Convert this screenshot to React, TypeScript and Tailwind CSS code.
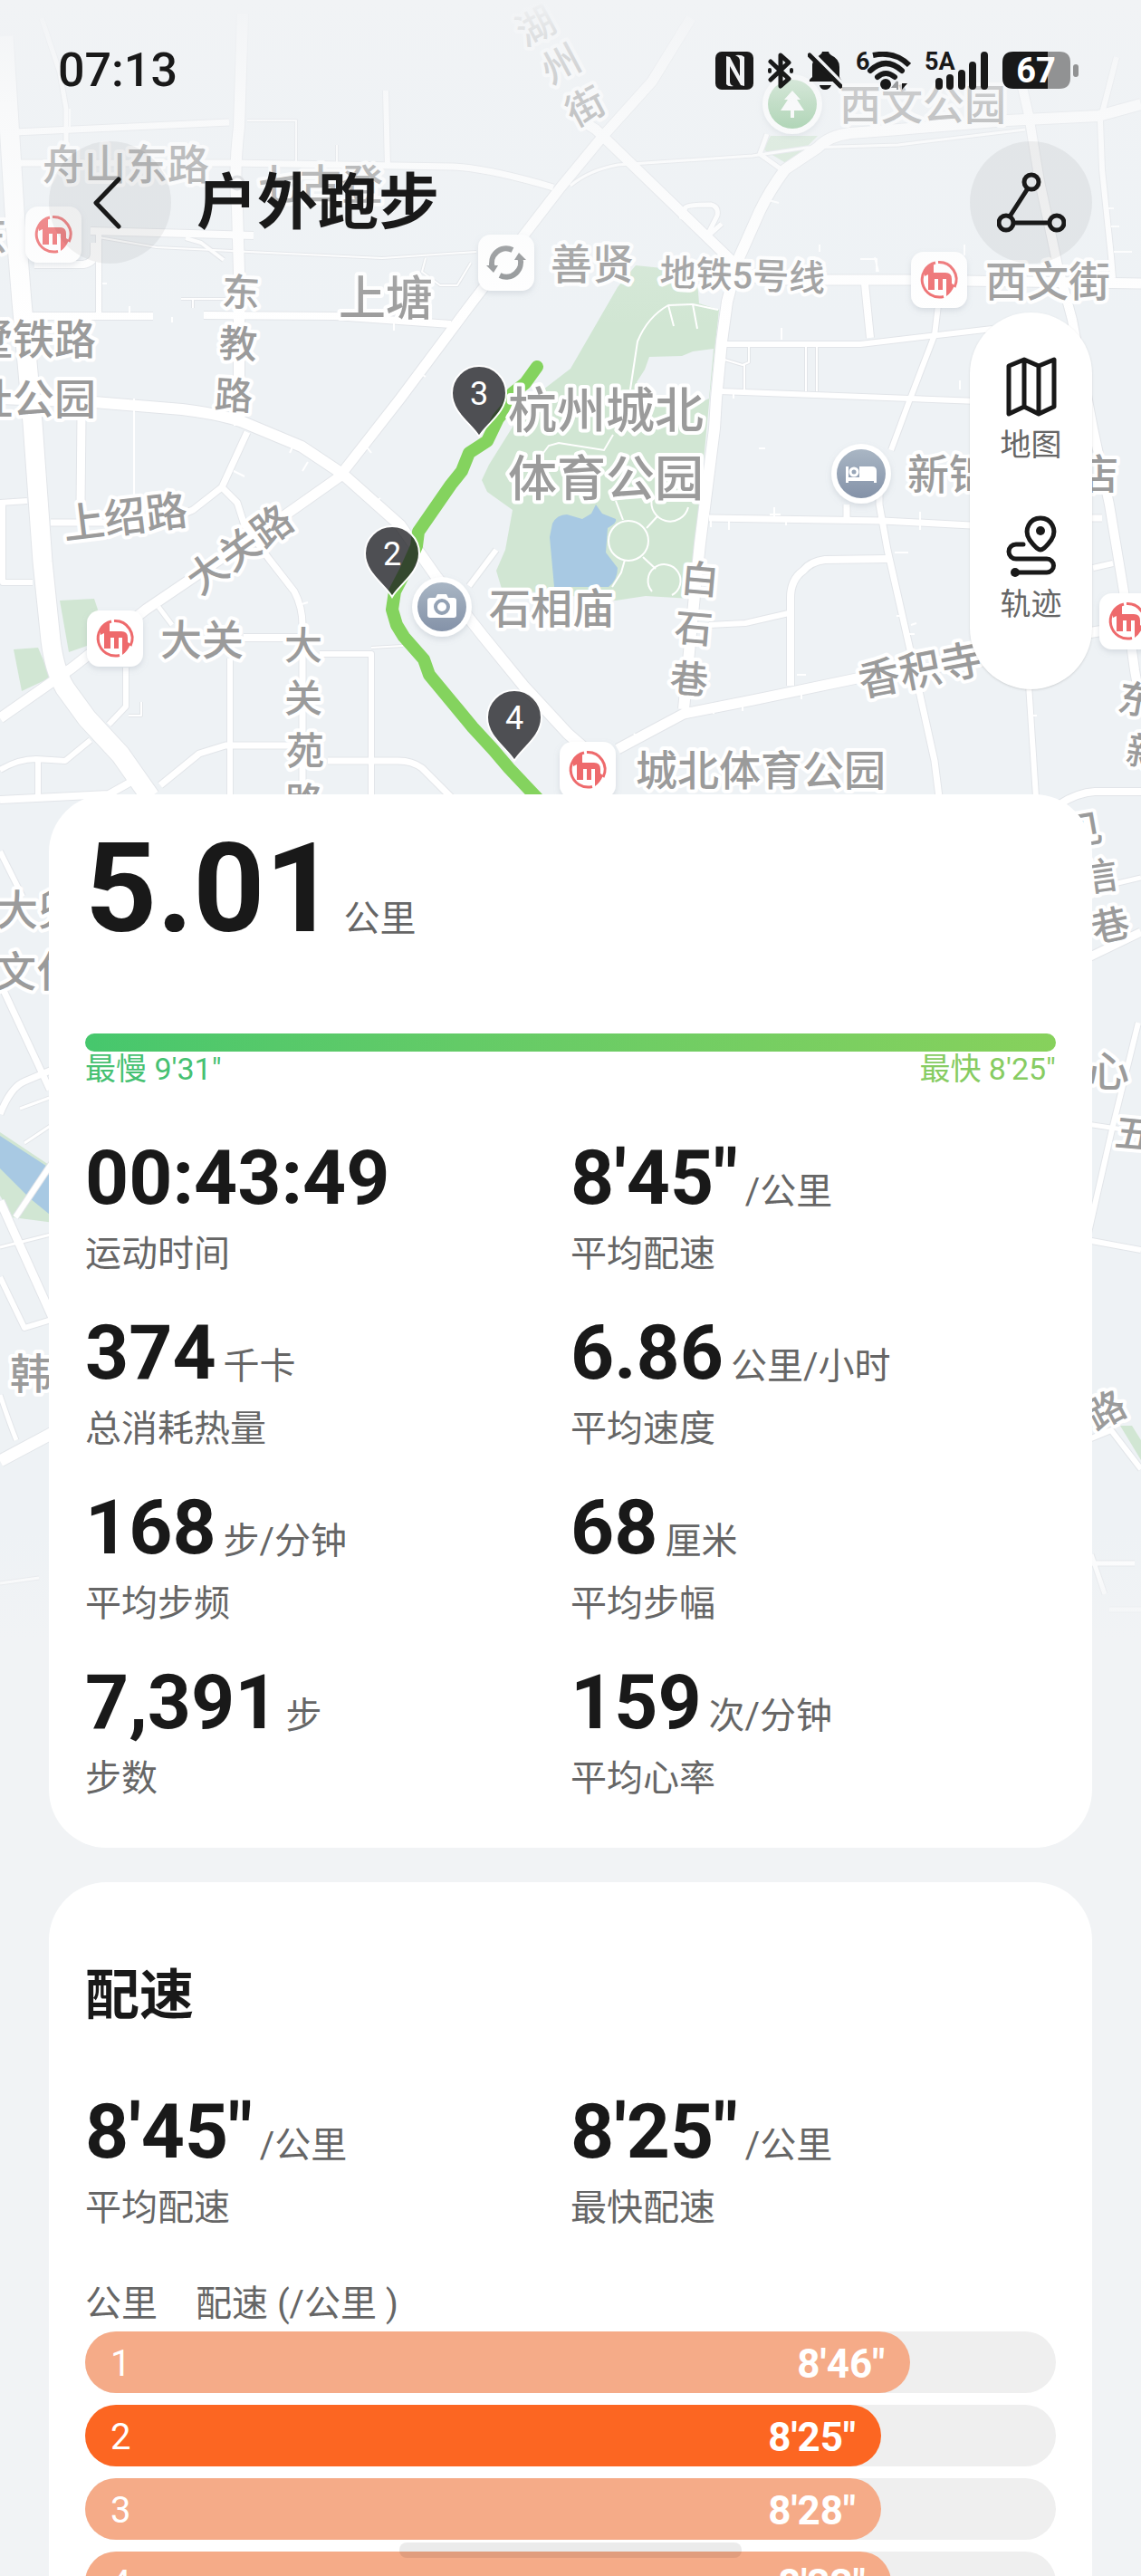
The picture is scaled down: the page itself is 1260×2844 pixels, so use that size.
import { ReactNode } from "react";

type Road = [d: string, width: number];

const roads: Road[] = [
  ["M4 40 16 233 24 333 36 467 47 620 56 707Q60 740 72 760L96 793 133 833 166 880", 21],
  ["M16 146 253 135", 7],
  ["M273 133H327V180", 2],
  ["M46 20 66 80 73 120V200", 5],
  ["M268 15 264 140Q258 190 262 230L264 300V470", 12],
  ["M16 180 250 180 500 184Q540 186 611 207", 7],
  ["M426 100 428 185", 6],
  ["M372 160V182", 2],
  ["M100 255 280 260", 8],
  ["M109 262 173 273 422 285 526 278", 2],
  ["M205 263 222 268 247 287", 4],
  ["M38 292H92Q104 290 104 280V268", 8],
  ["M109 258V347", 6],
  ["M32 349H169", 8],
  ["M200 330H250M213 330V340", 2],
  ["M225 348 370 349 498 358", 8],
  ["M470 285 466 300 486 315H505L520 290", 2],
  ["M763 20 720 90 666 150 619 207 522 333 442 440 374 527 313 570 161 673 80 737 0 793", 11],
  ["M0 440 104 444 201 452Q250 458 273 468L333 493 378 523 442 580 482 637 534 703 578 757 627 810 650 830", 12],
  ["M273 477 245 538 213 563 180 577H56", 7],
  ["M245 538 262 555 270 580 297 617 325 653Q334 670 334 690V880", 7],
  ["M90 460 89 557", 9],
  ["M0 555 30 553M3 555V643H36", 6],
  ["M269 704H334", 8],
  ["M353 722H410V880", 6],
  ["M410 715 445 713", 2],
  ["M254 727V880", 6],
  ["M177 867 220 832 249 823H321M362 840H440Q455 840 466 848L498 880", 7],
  ["M139 737V780L120 800M100 817 72 840 40 838Q20 838 0 850M42 840V880", 6],
  ["M0 883 120 877 145 863", 8],
  ["M142 790H156V775", 2],
  ["M518 647 548 607", 6],
  ["M175 670 190 690", 5],
  ["M642 133 658 143 807 287 823 300Q835 309 850 309H1003L1260 313", 11],
  ["M1260 115 1213 128 1112 133 992 143 939 147Q915 150 903 163L867 187Q850 210 839 233L815 287 803 333 797 377 791 440 789 473 773 600 767 657 755 783", 12],
  ["M630 205Q650 188 682 182L831 172 891 163 992 160 1132 143", 3],
  ["M847 148 839 170 867 190", 5],
  ["M752 242 757 229Q760 226 785 226 794 228 792 238L780 262M797 247 779 263", 5],
  ["M955 313 961 373", 8],
  ["M799 380H950L1096 363", 6],
  ["M1036 337 1032 370 1004 443 984 497", 6],
  ["M795 432 1080 443", 6],
  ["M890 383V432M902 383V432", 2],
  ["M800 397 820 403 827 400V383M822 403V430", 2],
  ["M1120 57 1136 127 1148 200 1168 293 1184 353 1207 473 1225 557 1241 653 1253 740 1260 780", 10],
  ["M1233 63 1215 133 1217 187 1227 283 1229 307", 6],
  ["M783 572 975 575 1072 580M1200 572H1217", 7],
  ["M971 540V557L980 607 1004 713 1032 840 1037 880M935 557V577", 7],
  ["M980 617 911 618Q895 620 887 630 873 640 873 660V757", 8],
  ["M783 690 823 688 871 677", 6],
  ["M682 827 755 788 831 773 951 748 1084 730 1207 698 1225 695", 11],
  ["M1136 755 1144 880", 6],
  ["M1207 627 1229 622", 6],
  ["M1170 888Q1190 875 1209 874H1260", 8],
  ["M0 940 25 990", 6],
  ["M0 1085 55 1203", 7],
  ["M0 1230Q12 1200 27 1194L60 1180", 7],
  ["M0 1410 27 1466 60 1456", 6],
  ["M0 1326 58 1455", 9],
  ["M17 1344 60 1280", 6],
  ["M0 1377 60 1362M27 1262 60 1240M22 1224 60 1210", 3],
  ["M0 1540Q10 1570 18 1590", 5],
  ["M0 1613 60 1581", 13],
  ["M0 1748 43 1742", 3],
  ["M1230 976 1260 969", 5],
  ["M1200 1058 1260 1029", 9],
  ["M1200 1241 1260 1250", 5],
  ["M1257 1129 1228 1247 1200 1370", 6],
  ["M1200 1369 1260 1380", 6],
  ["M1200 1590 1227 1579 1260 1622", 6],
  ["M1200 1726H1253M1205 1716 1220 1760M1225 1777H1260", 5],
];

const ticks =
  "M77 140V120M250 447V440M148 560V440M320 500 326 487M340 510 334 520M420 550 410 558M400 545 412 552M258 520 270 526M330 668 340 665M410 500 402 490M785 572V582M805 585V572M855 560V572M850 568H862M1016 565V585M868 580V572M1000 680H990M1006 690 1012 688M1010 700H1002M890 745H880M700 810 708 818M788 788V780M820 785V778M885 765V772M1145 790H1140M810 440V432M863 375V362M1060 430V420M988 610H1003M845 495H838M1230 230H1220M1227 250H1236M1230 278H1250M460 410 470 416M845 220 860 224M905 270V278M968 300V286H950M1065 270V282M190 350V356M320 345V352M435 356V365M113 313H118M143 345V338M970 300 966 284";

type Place = {
  text: string;
  x: number;
  y: number;
  size?: number;
  rotate?: number;
};

// x, y is the middle of each label
const places: Place[] = [
  { text: "舟山东路", x: 139, y: 181 },
  { text: "七古登", x: 354, y: 203 },
  { text: "东", x: -15, y: 260 },
  { text: "上塘", x: 426, y: 328, size: 52 },
  { text: "东", x: 266, y: 322, size: 42, rotate: 3 },
  { text: "教", x: 263, y: 379, size: 42, rotate: 3 },
  { text: "路", x: 258, y: 436, size: 42, rotate: 3 },
  { text: "墅铁路", x: 37, y: 374 },
  { text: "址公园", x: 37, y: 440 },
  { text: "善贤", x: 654, y: 291 },
  { text: "地铁5号线", x: 820, y: 303, size: 40, rotate: 2 },
  { text: "西文公园", x: 1019, y: 115 },
  { text: "西文街", x: 1157, y: 310 },
  { text: "湖", x: 591, y: 28, size: 42, rotate: -28 },
  { text: "州", x: 619, y: 70, size: 42, rotate: -28 },
  { text: "街", x: 646, y: 117, size: 42, rotate: -28 },
  { text: "杭州城北", x: 669, y: 452, size: 54 },
  { text: "体育公园", x: 669, y: 527, size: 54 },
  { text: "石相庙", x: 609, y: 671 },
  { text: "上绍路", x: 138, y: 570, rotate: -7 },
  { text: "大关路", x: 264, y: 606, size: 44, rotate: -36 },
  { text: "大关", x: 223, y: 706 },
  { text: "大", x: 335, y: 712, size: 42 },
  { text: "关", x: 335, y: 770, size: 42 },
  { text: "苑", x: 337, y: 828, size: 42 },
  { text: "路", x: 336, y: 884, size: 42 },
  { text: "白", x: 773, y: 639, size: 42, rotate: 5 },
  { text: "石", x: 766, y: 693, size: 42, rotate: 5 },
  { text: "巷", x: 761, y: 749, size: 42, rotate: 5 },
  { text: "香积寺", x: 1016, y: 739, rotate: -11 },
  { text: "新锦", x: 1048, y: 523 },
  { text: "店", x: 1212, y: 523 },
  { text: "城北体育公园", x: 840, y: 850 },
  { text: "东", x: 1256, y: 772, size: 42, rotate: 10 },
  { text: "新", x: 1265, y: 830, size: 42, rotate: 10 },
  { text: "大兜", x: 42, y: 1004 },
  { text: "文化", x: 40, y: 1072 },
  { text: "韩", x: 34, y: 1516 },
  { text: "见", x: 1196, y: 916, size: 42, rotate: -10 },
  { text: "信", x: 1213, y: 967, size: 42, rotate: -8 },
  { text: "巷", x: 1226, y: 1021, size: 42, rotate: -12 },
  { text: "心", x: 1224, y: 1182 },
  { text: "五", x: 1252, y: 1251, size: 42, rotate: 5 },
  { text: "路", x: 1221, y: 1556, size: 42, rotate: -28 },
];

const metros = [
  [59, 259],
  [1037, 309],
  [127, 705],
  [649, 850],
  [1245, 686],
];

const kmPins = [
  { n: 3, x: 529, y: 434 },
  { n: 2, x: 433, y: 611 },
  { n: 4, x: 568, y: 792 },
];

const stats = [
  { value: "00:43:49", unit: "", label: "运动时间" },
  { value: "8'45\"", unit: "/公里", label: "平均配速" },
  { value: "374", unit: "千卡", label: "总消耗热量" },
  { value: "6.86", unit: "公里/小时", label: "平均速度" },
  { value: "168", unit: "步/分钟", label: "平均步频" },
  { value: "68", unit: "厘米", label: "平均步幅" },
  { value: "7,391", unit: "步", label: "步数" },
  { value: "159", unit: "次/分钟", label: "平均心率" },
];

const paceStats = [
  { value: "8'45\"", unit: "/公里", label: "平均配速" },
  { value: "8'25\"", unit: "/公里", label: "最快配速" },
];

const splits = [
  { km: 1, pace: "8'46\"", percent: 85 },
  { km: 2, pace: "8'25\"", percent: 82, fastest: true },
  { km: 3, pace: "8'28\"", percent: 82 },
  { km: 4, pace: "8'33\"", percent: 83 },
];

function MetroMark({ x, y }: { x: number; y: number }) {
  return (
    <g transform={`translate(${x} ${y})`}>
      <rect x="-31" y="-31" width="62" height="62" rx="14" fill="#fff" filter="url(#soft)" />
      <g fill="none" stroke="#ee6a6c">
        <path d="M-4 -19A19 19 0 0 0 5 18.500" strokeWidth="3" />
        <path d="M-1 -19.500A19 19 0 0 1 17 8" strokeWidth="3" />
      </g>
      <path
        d="M-16 -10Q-12 -16 -6 -18V-8H7Q14 -8 14 -1V4L17 6Q14 14 8 18V-1H4V11H-1V-1H-5V11H-12V-6L-16 -4Z"
        fill="#ee6a6c"
      />
    </g>
  );
}

function Poi({ x, y, fill, children }: { x: number; y: number; fill: string; children: ReactNode }) {
  return (
    <g transform={`translate(${x} ${y})`}>
      <circle r="33" fill="#fff" filter="url(#soft)" />
      <circle r="27" fill={fill} />
      {children}
    </g>
  );
}

function RouteMap() {
  return (
    <svg viewBox="0 0 1260 1840" className="absolute inset-x-0 top-0 w-full" role="img" aria-label="路线地图">
      <defs>
        <linearGradient id="slate" x1="0" y1="0" x2="0" y2="1">
          <stop offset="0" stopColor="#a9b6c4" />
          <stop offset="1" stopColor="#8492a8" />
        </linearGradient>
        <linearGradient id="leaf" x1="0" y1="0" x2="0" y2="1">
          <stop offset="0" stopColor="#a8d3ab" />
          <stop offset="1" stopColor="#7dbd86" />
        </linearGradient>
        <linearGradient id="topFade" x1="0" y1="0" x2="0" y2="1">
          <stop offset="0" stopColor="#f1f3f5" />
          <stop offset=".1" stopColor="#f1f3f5" stopOpacity=".8" />
          <stop offset=".32" stopColor="#f1f3f5" stopOpacity=".5" />
          <stop offset=".6" stopColor="#f1f3f5" stopOpacity=".3" />
          <stop offset="1" stopColor="#f1f3f5" stopOpacity="0" />
        </linearGradient>
        <linearGradient id="bottomFade" x1="0" y1="0" x2="0" y2="1">
          <stop offset="0" stopColor="#f1f3f5" stopOpacity="0" />
          <stop offset=".8" stopColor="#f1f3f5" />
        </linearGradient>
        <filter id="soft" x="-30%" y="-30%" width="160%" height="160%">
          <feDropShadow dx="0" dy="3" stdDeviation="3" floodColor="#8a94a0" floodOpacity=".25" />
        </filter>
      </defs>

      <rect width="1260" height="1840" fill="#eef2f5" />

      <g fill="#d1e6d3">
        <path d="M702 293 760 299 770 310 772 335 794 342 783 445 767 613 764 661 713 658 680 663 554 650 548 630 558 607 566 563 538 543 532 530 540 513 570 465 600 430 630 407 682 317Z" />
        <path d="M66 663 104 661 108 673 96 713 76 720Z" />
        <path d="M15 717 42 715 56 748 24 763Z" />
        <path d="M851 150H903L871 182 843 165Z" />
        <path d="M0 1250 60 1290V1350L14 1344 0 1320Z" />
        <path d="M1237 1574H1250L1260 1590V1612Z" />
      </g>
      <path d="M703 422 712 408 717 394 753 393 765 388 788 385 783 440 765 448 720 440Z" fill="#eef2f5" />
      <g fill="#a8c9e3">
        <path d="M607 593 610 578Q615 568 626 568L643 573 653 567 658 557 665 567 680 573Q682 577 671 583L669 610 682 627Q682 640 672 648L612 648Z" />
        <path d="M0 1254 60 1293V1345L33 1323 0 1290Z" />
      </g>
      <g fill="none" stroke="#fff" strokeWidth="2">
        <path d="M696 430 704 377Q715 350 738 337L765 336 793 342M738 337 744 360M765 336 770 363" />
        <path d="M600 500 606 492 617 489 667 497 677 480M680 553 688 574M714 583 726 570M710 615 724 628M690 618 686 632 676 648" />
        <circle cx="694" cy="597" r="22" />
        <path d="M720 653A18 18 0 1 1 742 657M720 550A20 20 0 0 0 760 560" />
      </g>

      <g fill="none" stroke="#e2e5e9" strokeLinejoin="round">
        {roads.map(([d, w]) => (
          <path key={d} d={d} strokeWidth={w + 2} />
        ))}
      </g>
      <g fill="none" stroke="#fff" strokeLinejoin="round">
        {roads.map(([d, w]) => (
          <path key={d} d={d} strokeWidth={w} />
        ))}
        <path d={ticks} strokeWidth="2" />
      </g>
      <circle cx="262" cy="202" r="7" fill="#fff" stroke="#d5d7da" strokeWidth="3" />

      <path
        d="M593 405 580 423 566 434 560 450 550 462 538 487 518 500 510 520 498 535 462 587 460 603 448 630 436 653 433 673 438 690 446 703 468 728 474 745 522 803 545 828 562 848 596 884"
        fill="none"
        stroke="#84d35e"
        strokeWidth="14"
        strokeLinecap="round"
        strokeLinejoin="round"
      />

      <g
        fill="#9b9b9b"
        stroke="#fff"
        strokeWidth="8"
        strokeLinejoin="round"
        textAnchor="middle"
        className="font-medium [paint-order:stroke]"
      >
        {places.map(({ text, x, y, size = 46, rotate = 0 }) => (
          <text key={`${text}${y}`} fontSize={size} dy="0.38em" transform={`translate(${x} ${y}) rotate(${rotate})`}>
            {text}
          </text>
        ))}
      </g>

      {metros.map(([x, y]) => (
        <MetroMark key={x} x={x} y={y} />
      ))}
      <g transform="translate(559 290)">
        <rect x="-31" y="-31" width="62" height="62" rx="14" fill="#fff" filter="url(#soft)" />
        <path d="M7 -14A16 16 0 0 0 -15 6M-7 14A16 16 0 0 0 15 -6" fill="none" stroke="#8f9294" strokeWidth="6" />
        <path d="M-22 3H-9L-14 11ZM22 -3H9L14 -11Z" fill="#8f9294" />
      </g>

      <Poi x={875} y={115} fill="url(#leaf)">
        <path d="M0 -15 9 -5H5L13 7H2V15H-2V7H-13L-5 -5H-9Z" fill="#fff" />
      </Poi>
      <Poi x={488} y={670} fill="url(#slate)">
        <path d="M-13 -10H-7L-5 -14H5L7 -10H13Q16 -10 16 -7V9Q16 12 13 12H-13Q-16 12 -16 9V-7Q-16 -10 -13 -10Z" fill="#fff" />
        <circle r="7" cy="0" fill="#fff" stroke="#93a1b3" strokeWidth="4" />
      </Poi>
      <Poi x={951} y={523} fill="url(#slate)">
        <path d="M-17 -8H-14V4H-2V-8H12Q17 -8 17 -3V10H14V8H-14V10H-17Z" fill="#fff" />
        <circle cx="-8" cy="-2" r="4" fill="none" stroke="#fff" strokeWidth="3" />
      </Poi>

      {kmPins.map(({ n, x, y }) => (
        <g key={n} transform={`translate(${x} ${y})`}>
          <path
            d="M0 48C-8 34 -30 22 -30 0A30 30 0 0 1 30 0C30 22 8 34 0 48Z"
            fill="#1c1c20"
            fillOpacity=".76"
            stroke="#fff"
            strokeWidth="2"
          />
          <text y="13" fontSize="36" fill="#fff" textAnchor="middle">
            {n}
          </text>
        </g>
      ))}

      <rect width="1260" height="360" fill="url(#topFade)" />
      <rect y="1690" width="1260" height="150" fill="url(#bottomFade)" />
    </svg>
  );
}

function StatusBar() {
  return (
    <div className="flex h-[156px] items-center justify-between pl-[64px] pr-[69px]">
      <time className="text-[52px] font-medium leading-none">07:13</time>
      <div className="flex items-center gap-4">
        <svg width="42" height="42" viewBox="0 0 42 42" aria-label="NFC">
          <rect width="42" height="42" rx="7" fill="#191919" />
          <path d="M12 5 16 6 27 27V10Q27 6 22 4Q29 3 32 6V38L28 37 16 16V33Q16 37 20 38Q14 39 12 36Z" fill="#f1f3f5" />
        </svg>
        <svg width="28" height="42" viewBox="0 0 28 42" fill="none" stroke="#191919" strokeWidth="5" strokeLinejoin="round" strokeLinecap="round" aria-label="蓝牙">
          <path d="M3 11 23 30 14 38V4L23 12 3 31" />
          <path d="M2 20V22M26 20V22" strokeWidth="4" />
        </svg>
        <svg width="38" height="42" viewBox="0 0 38 42" aria-label="静音">
          <path d="M13 4Q16 2 16 0H23Q23 2 26 4Q35 8 35 17V28L38 33H2Q1 31 5 28V14Q6 8 13 4Z" fill="#191919" />
          <path d="M13 37H26Q24 42 19 42T13 37Z" fill="#191919" />
          <path d="M5 1 40 37" stroke="#f1f3f5" strokeWidth="4" />
          <path d="M2 4 36 38" stroke="#191919" strokeWidth="5" strokeLinecap="round" />
        </svg>
        <svg width="60" height="42" viewBox="0 0 60 42" aria-label="无线网络">
          <text x="-1" y="20" fontSize="27" fontWeight="700" fill="#191919">
            6
          </text>
          <g fill="none" stroke="#191919" strokeWidth="6">
            <path d="M18 4Q42 -1 58 15" strokeLinecap="butt" />
            <path d="M15 21Q32 5 50 21" strokeLinecap="round" />
            <path d="M23 28Q32 20 42 28" strokeLinecap="round" />
          </g>
          <circle cx="32" cy="36" r="6" fill="#191919" />
          <path d="M45 33V42M45 33 40 39H45" stroke="#9a9c9e" strokeWidth="2" fill="#9a9c9e" />
          <path d="M50 32V42L56 35H50Z" fill="#191919" />
        </svg>
        <svg width="69" height="42" viewBox="0 0 69 42" aria-label="移动信号">
          <text x="-1" y="20" fontSize="27" fontWeight="700" fill="#191919">
            5A
          </text>
          <path d="M15 33V38M27 29V38M40 24V38M52 15V38M65 4V38" stroke="#191919" strokeWidth="8" strokeLinecap="round" />
        </svg>
        <svg width="84" height="42" viewBox="0 0 84 42" aria-label="电量">
          <path d="M50 0H63Q75 0 75 12V29Q75 41 63 41H50Z" fill="#919293" />
          <path d="M50 0H12Q0 0 0 12V29Q0 41 12 41H50Z" fill="#191919" />
          <rect x="78" y="14" width="6" height="14" rx="3" fill="#919293" />
          <text x="37" y="34" fontSize="38" fontWeight="700" fill="#fff" textAnchor="middle">
            67
          </text>
        </svg>
      </div>
    </div>
  );
}

function MapTools() {
  return (
    <div className="mr-[54px] mt-[54px] flex h-[416px] w-[135px] flex-col items-center gap-14 self-end rounded-full bg-white pt-12 shadow-sm">
      <button type="button" className="flex flex-col items-center gap-2 text-[34px] leading-[44px] text-[#666]">
        <svg width="56" height="68" viewBox="0 0 56 68" fill="none" stroke="#191919" strokeWidth="5" strokeLinejoin="round">
          <path d="M3 11 20 4 36 11 53 4V56L36 64 20 56 3 64ZM20 4V56M36 11V64" />
        </svg>
        地图
      </button>
      <button type="button" className="flex flex-col items-center gap-2 text-[34px] leading-[44px] text-[#666]">
        <svg width="56" height="68" viewBox="0 0 56 68" fill="none" stroke="#191919" strokeWidth="5" strokeLinecap="round" strokeLinejoin="round">
          <path d="M38 38Q34 38 26 27C19 16 26 3 38 3S57 16 50 27Q42 38 38 38Z" />
          <circle cx="38" cy="17" r="5" fill="#191919" stroke="none" />
          <path d="M19 32H11A8 8 0 0 0 11 48H45A7 7 0 0 1 45 63H10" />
          <circle cx="10" cy="63" r="5" fill="#191919" stroke="none" />
        </svg>
        轨迹
      </button>
    </div>
  );
}

function Stat({ value, unit, label }: { value: string; unit: string; label: string }) {
  return (
    <div>
      <dd className="flex items-baseline gap-2">
        <span className="text-[84px] font-bold leading-[96px]">{value}</span>
        {unit && <span className="text-[40px] leading-[56px] text-[#666]">{unit}</span>}
      </dd>
      <dt className="mt-2 text-[40px] leading-[56px] text-[#666]">{label}</dt>
    </div>
  );
}

export default function App() {
  return (
    <div className="relative h-screen overflow-hidden bg-[#f1f3f5] font-['Roboto','Noto_Sans_CJK_SC',sans-serif] text-[#191919]">
      <RouteMap />

      <div className="relative flex flex-col">
        <StatusBar />

        <header className="flex items-center px-[54px]">
          <button type="button" aria-label="返回" className="flex size-[135px] items-center justify-center rounded-full bg-black/5">
            <svg width="32" height="58" viewBox="0 0 32 58" fill="none" stroke="#191919" strokeWidth="5" strokeLinecap="round" strokeLinejoin="round" className="mr-2">
              <path d="M29 3 4 29 29 55" />
            </svg>
          </button>
          <h1 className="ml-7 flex-1 text-[67px] font-bold leading-[80px]">户外跑步</h1>
          <button type="button" aria-label="分享" className="flex size-[135px] items-center justify-center rounded-full bg-black/5">
            <svg width="76" height="68" viewBox="0 0 76 68" fill="none" stroke="#191919" strokeWidth="5">
              <circle cx="38" cy="11" r="8" />
              <circle cx="10" cy="56" r="8" />
              <circle cx="66" cy="56" r="8" />
              <path d="M34 18 14 49M18 56H58" />
            </svg>
          </button>
        </header>

        <MapTools />

        <main className="mx-[54px] mt-[116px] flex flex-col gap-[38px]">
          <section className="rounded-[64px] bg-white px-10 pb-12 pt-6">
            <p className="flex items-baseline gap-2">
              <span className="text-[138px] font-bold leading-[160px]">5.01</span>
              <span className="text-[40px] leading-[56px] text-[#666]">公里</span>
            </p>

            <div className="mt-20 h-5 rounded-full bg-linear-to-r from-[#46c76d] to-[#87d15c]" />
            <div className="flex justify-between text-[34px] leading-[38px]">
              <span className="text-[#46c172]">最慢 9'31"</span>
              <span className="text-[#87cc62]">最快 8'25"</span>
            </div>

            <dl className="mt-[54px] grid grid-cols-2 gap-y-[33px]">
              {stats.map((s) => (
                <Stat key={s.label} {...s} />
              ))}
            </dl>
          </section>

          <section className="rounded-[64px] bg-white px-10 pb-10 pt-[84px]">
            <h2 className="text-[60px] font-bold leading-[84px]">配速</h2>

            <dl className="mt-[60px] grid grid-cols-2">
              {paceStats.map((s) => (
                <Stat key={s.label} {...s} />
              ))}
            </dl>

            <div className="mt-[50px] flex gap-[42px] text-[40px] leading-[56px] text-[#666]">
              <span>公里</span>
              <span>配速 (/公里 )</span>
            </div>
            <ol className="mt-[2px] flex flex-col gap-[13px] text-white">
              {splits.map((s) => (
                <li key={s.km} className="h-[68px] rounded-full bg-[#efefef]">
                  <div
                    className={`flex h-full items-center justify-between rounded-full px-7 pt-1 ${
                      s.fastest ? "bg-[#fc6622]" : "bg-[#f5ab88]"
                    }`}
                    style={{ width: `${s.percent}%` }}
                  >
                    <span className="text-[40px] leading-none">{s.km}</span>
                    <span className="text-[44px] font-bold leading-none">{s.pace}</span>
                  </div>
                </li>
              ))}
            </ol>
          </section>
        </main>
      </div>

      <div className="absolute bottom-5 left-1/2 h-[17px] w-[30%] -translate-x-1/2 rounded-lg bg-black/8" />
    </div>
  );
}
